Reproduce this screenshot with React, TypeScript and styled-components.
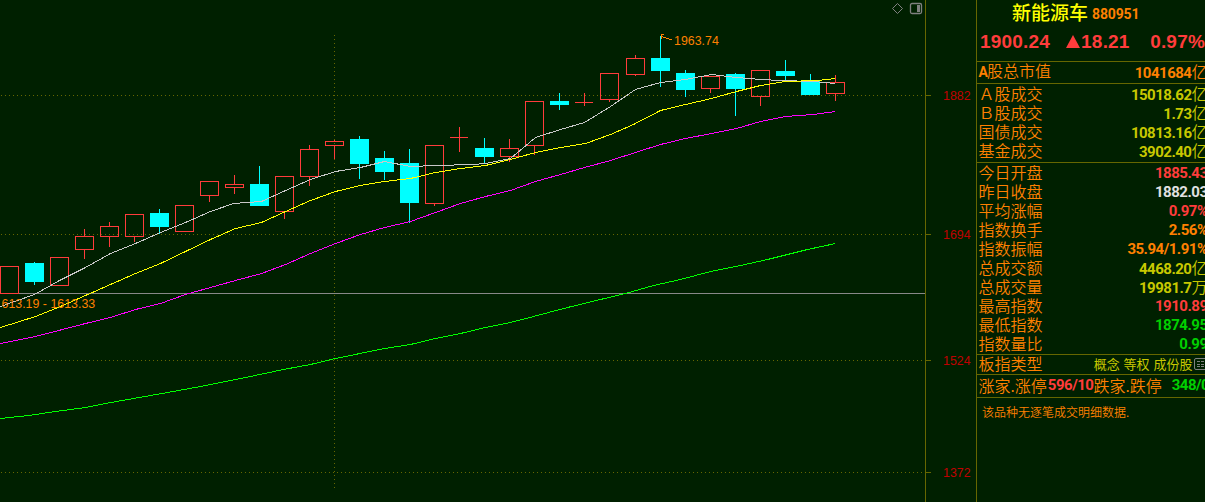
import React from "react";
import styled, { createGlobalStyle } from "styled-components";

const GlobalStyle = createGlobalStyle`
  body {
    margin: 0;
    background: #002000;
    overflow: hidden;
  }
`;

const colors = {
  back: "#002000",
  line: "#666600",
  orange: "#ff8000",
  red: "#ff3c3c",
  cyan: "#00ffff",
  yellow: "#c8c800",
  green: "#00d000",
  white: "#e0e0e0",
  axis: "#c00000",
};

const Screen = styled.div`
  display: flex;
  width: 1205px;
  height: 502px;
  overflow: hidden;
  background: ${colors.back};
`;

const Chart = styled.svg`
  display: block;
  flex: none;
  width: 976px;
  height: 502px;
`;

const ChartText = styled.text`
  font-family: "Liberation Sans", sans-serif;
  font-size: 12.4px;
`;

const Panel = styled.aside`
  flex: none;
  box-sizing: border-box;
  width: 229px;
  border-left: 1px solid ${colors.line};
  overflow: hidden;
  font-family: "Liberation Sans", "Noto Sans CJK SC", sans-serif;
`;

const Header = styled.header`
  height: 61px;
  border-bottom: 1px solid ${colors.line};
`;

const Title = styled.div`
  display: flex;
  align-items: center;
  height: 23px;
  padding-left: 35px;
  white-space: nowrap;
`;

const Name = styled.span`
  color: #ffff00;
  font-family: "Noto Sans CJK SC", sans-serif;
  font-size: 19px;
  font-weight: 500;
  line-height: 23px;
`;

const Code = styled.span`
  margin: 5px 0 0 4px;
  color: ${colors.orange};
  font-family: Roboto, sans-serif;
  font-size: 14px;
  font-weight: 700;
  letter-spacing: -0.15px;
`;

const Quote = styled.div`
  display: flex;
  align-items: center;
  height: 37px;
  padding-left: 3px;
  color: ${colors.red};
  font-size: 19px;
  font-weight: 700;
  letter-spacing: 0.2px;
  white-space: nowrap;
`;

const Change = styled.span`
  display: flex;
  align-items: center;
  width: 85px;
  margin-left: 16px;
`;

const Triangle = styled.svg`
  width: 14px;
  height: 13px;
  margin-right: 1px;
`;

const Section = styled.section<{ $top?: number; $bottom?: number }>`
  padding: ${(p) => p.$top ?? 0}px 0 ${(p) => p.$bottom ?? 0}px 1.5px;
  border-bottom: 1px solid ${colors.line};
`;

const Row = styled.div`
  display: flex;
  align-items: center;
  justify-content: space-between;
  width: 229px;
  height: 19px;
  white-space: nowrap;
`;

const Label = styled.span`
  margin-top: -2px;
  color: ${colors.orange};
  font-family: "Noto Sans CJK SC", sans-serif;
  font-size: 16px;
  font-weight: 350;
  line-height: 19px;
`;

const Value = styled.span<{ $color: string }>`
  color: ${(p) => p.$color};
  font-family: Roboto, "Noto Sans CJK SC", sans-serif;
  font-size: 15px;
  font-weight: 700;
  line-height: 19px;
  letter-spacing: -0.5px;
`;

const Unit = styled.span`
  font-family: "Noto Sans CJK SC", sans-serif;
  font-size: 16px;
  font-weight: 350;
  line-height: 17px;
  letter-spacing: 0;
`;

const Bold = styled.b`
  font-family: Roboto, sans-serif;
  font-size: 14px;
  letter-spacing: -1px;
`;

const Tags = styled.span`
  display: flex;
  align-items: center;
  gap: 1px;
  margin: -2px 1px 0 0;
  color: ${colors.yellow};
  font-family: "Noto Sans CJK SC", sans-serif;
  font-size: 13px;
  line-height: 19px;
  word-spacing: 1px;
`;

const Counts = styled(Row)`
  justify-content: flex-start;
  height: 22px;
`;

const Count = styled(Value)<{ $width: number; $left: number }>`
  box-sizing: border-box;
  width: ${(p) => p.$width}px;
  margin-top: -2px;
  padding-left: ${(p) => p.$left}px;
`;

const Note = styled.p`
  margin: 5px 0 0 5px;
  color: ${colors.orange};
  font-family: "Noto Sans CJK SC", sans-serif;
  font-size: 12px;
  font-weight: 350;
  line-height: 18px;
`;

// x of centre, body top, body bottom, wick top, wick bottom, rising
type Candle = [number, number, number, number, number, boolean];

const candles: Candle[] = [
  [9, 266, 294, 266, 294, true],
  [34, 263, 282, 262, 285, false],
  [59, 257, 286, 257, 286, true],
  [84, 236, 250, 229, 259, true],
  [109, 226, 237, 222, 247, true],
  [134, 214, 237, 214, 242, true],
  [159, 213, 227, 209, 234, false],
  [184, 205, 232, 205, 232, true],
  [209, 181, 196, 181, 202, true],
  [234, 184, 188, 175, 194, true],
  [259, 184, 206, 166, 206, false],
  [284, 176, 212, 176, 219, true],
  [309, 149, 177, 145, 186, true],
  [334, 141, 146, 140, 159, true],
  [359, 139, 164, 136, 179, false],
  [384, 158, 172, 151, 180, false],
  [409, 163, 203, 149, 223, false],
  [434, 145, 204, 145, 206, true],
  [459, 137, 138, 127, 152, true],
  [484, 148, 157, 138, 163, false],
  [509, 148, 157, 139, 162, true],
  [534, 101, 146, 101, 155, true],
  [559, 101, 105, 93, 110, false],
  [584, 102, 103, 93, 106, true],
  [609, 73, 100, 73, 102, true],
  [635, 58, 75, 55, 76, true],
  [660, 58, 71, 36, 87, false],
  [685, 73, 90, 70, 97, false],
  [710, 76, 89, 76, 93, true],
  [735, 74, 89, 73, 116, false],
  [760, 70, 97, 70, 106, true],
  [785, 71, 76, 60, 80, false],
  [810, 81, 95, 74, 95, false],
  [835, 82, 94, 75, 101, true],
];

const averages = [
  {
    color: "#c8c8c8",
    points:
      "0,306 34,294 59,280 85,267 110,253 135,243 160,232 185,222 210,211 233,203 261,201 283,191 310,179 335,171 360,167 384,161 410,166 435,165 473,164 485,163 510,158 535,137 560,129 584,122 610,106 635,89 660,82 685,79 711,74 736,77 760,79 780,80 813,81 835,83",
  },
  {
    color: "#ffff00",
    points:
      "0,327 35,316 60,306 85,295 110,284 135,273 160,263 185,251 210,239 235,228 261,222 283,212 310,200 335,191 360,185 384,181 410,178 435,172 460,168 485,165 510,159 535,152 560,147 585,143 610,134 633,124 660,110 685,104 711,98 736,91 760,85 785,81 817,80 835,78",
  },
  {
    color: "#ff00ff",
    points:
      "0,343 35,336 85,323 110,317 135,309 160,303 185,294 210,287 235,280 261,273 285,264 310,253 335,243 360,234 384,227 410,221 435,212 460,203 485,196 510,190 535,181 560,174 584,167 610,160 635,152 660,144 685,138 711,133 736,128 760,121 785,116 813,114 835,111",
  },
  {
    color: "#00ff00",
    points:
      "0,418 28,415 55,411 85,407 105,403 133,398 167,392 200,386 245,377 283,369 310,364 335,358 384,348 410,344 435,338 460,333 485,327 510,322 533,316 567,307 600,299 625,293 653,285 680,279 710,271 740,265 767,259 807,249 835,243",
  },
];

const grid = [
  { y: 95, label: "1882" },
  { y: 234, label: "1694" },
  { y: 360, label: "1524" },
  { y: 472, label: "1372" },
];

const turnover = [
  { label: "Ａ股成交", value: "15018.62", unit: "亿", color: colors.yellow },
  { label: "Ｂ股成交", value: "1.73", unit: "亿", color: colors.yellow },
  { label: "国债成交", value: "10813.16", unit: "亿", color: colors.yellow },
  { label: "基金成交", value: "3902.40", unit: "亿", color: colors.yellow },
];

const stats = [
  { label: "今日开盘", value: "1885.43", color: colors.red },
  { label: "昨日收盘", value: "1882.03", color: colors.white },
  { label: "平均涨幅", value: "0.97%", color: colors.red },
  { label: "指数换手", value: "2.56%", color: colors.orange },
  { label: "指数振幅", value: "35.94/1.91%", color: colors.orange },
  { label: "总成交额", value: "4468.20", unit: "亿", color: colors.yellow },
  { label: "总成交量", value: "19981.7", unit: "万", color: colors.yellow },
  { label: "最高指数", value: "1910.89", color: colors.red },
  { label: "最低指数", value: "1874.95", color: colors.green },
  { label: "指数量比", value: "0.99", color: colors.green },
];

interface StatProps {
  label: React.ReactNode;
  value: string;
  unit?: string;
  color: string;
}

const Stat: React.FC<StatProps> = ({ label, value, unit, color }) => (
  <Row>
    <Label>{label}</Label>
    <Value $color={color}>
      {value}
      {unit && <Unit>{unit}</Unit>}
    </Value>
  </Row>
);

const CandleShape: React.FC<{ candle: Candle }> = ({ candle }) => {
  const [x, top, bottom, high, low, rising] = candle;
  const color = rising ? colors.red : colors.cyan;
  if (!rising) {
    return (
      <g fill={color}>
        <rect x={x} y={high} width={1} height={low - high} />
        <rect x={x - 9} y={top} width={19} height={bottom - top} />
      </g>
    );
  }
  return (
    <g fill={color}>
      <rect x={x} y={high} width={1} height={top - high} />
      <rect x={x} y={bottom} width={1} height={low - bottom} />
      {bottom - top > 1 ? (
        <rect
          x={x - 8.5}
          y={top + 0.5}
          width={18}
          height={bottom - top - 1}
          fill="none"
          stroke={color}
        />
      ) : (
        <rect x={x - 9} y={top} width={18} height={1} />
      )}
    </g>
  );
};

const KLine = () => (
  <Chart viewBox="0 0 976 502" shapeRendering="crispEdges">
    {grid.map(({ y, label }) => (
      <g key={label}>
        <line x1={1} x2={925} y1={y + 0.5} y2={y + 0.5} stroke={colors.line} strokeDasharray="1 3" />
        <rect x={926} y={y} width={5} height={1} fill={colors.line} />
        <ChartText x={943} y={y + 5} fill={colors.axis}>
          {label}
        </ChartText>
      </g>
    ))}
    <line x1={334.5} x2={334.5} y1={35} y2={489} stroke={colors.line} strokeDasharray="1 3" />
    <rect x={925} y={0} width={1} height={502} fill={colors.line} />
    <rect x={0} y={293} width={925} height={1} fill="#888888" />
    {candles.map((candle) => (
      <CandleShape key={candle[0]} candle={candle} />
    ))}
    {averages.map(({ color, points }) => (
      <polyline key={color} points={points} transform="translate(0.5 0.5)" fill="none" stroke={color} />
    ))}
    <ChartText x={1.5} y={308} fill={colors.orange}>
      613.19 - 1613.33
    </ChartText>
    <ChartText x={674} y={45} fill={colors.orange}>
      1963.74
    </ChartText>
    <path d="M664 34.5h-3v4M661 36.5l11 3.5" fill="none" stroke={colors.orange} />
    <g fill="none" stroke="#808080" shapeRendering="auto">
      <path d="M897.5 3.5l5 5-5 5-5-5z" />
      <rect x={910.5} y={3.5} width={11} height={10} rx={1.5} strokeWidth={1.3} />
      <rect x={917} y={5} width={3} height={7} fill="#808080" stroke="none" />
    </g>
  </Chart>
);

const ListIcon = () => (
  <svg width="13" height="12" viewBox="0 0 13 12" fill="none" stroke="#808080">
    <rect x="0.5" y="0.5" width="12" height="11" rx="1.5" />
    <path d="M3 3.5h3M7 3.5h3M3 6.5h3M7 6.5h3M3 8.5h3M7 8.5h3" />
  </svg>
);

export default function App() {
  return (
    <Screen>
      <GlobalStyle />
      <KLine />
      <Panel>
        <Header>
          <Title>
            <Name>新能源车</Name>
            <Code>880951</Code>
          </Title>
          <Quote>
            <span>1900.24</span>
            <Change>
              <Triangle viewBox="0 0 14 13">
                <path d="M7 0L14 13H0z" fill={colors.red} />
              </Triangle>
              18.21
            </Change>
            <span>0.97%</span>
          </Quote>
        </Header>
        <Section $top={1} $bottom={1}>
          <Stat
            label={
              <>
                <Bold>A</Bold>股总市值
              </>
            }
            value="1041684"
            unit="亿"
            color={colors.orange}
          />
        </Section>
        <Section $top={1} $bottom={1}>
          {turnover.map((item) => (
            <Stat key={item.label} {...item} />
          ))}
        </Section>
        <Section $top={1}>
          {stats.map((item) => (
            <Stat key={item.label} {...item} />
          ))}
        </Section>
        <Section>
          <Row>
            <Label>板指类型</Label>
            <Tags>
              概念 等权 成份股
              <ListIcon />
            </Tags>
          </Row>
        </Section>
        <Section>
          <Counts>
            <Label>涨家.涨停</Label>
            <Count $color={colors.red} $width={49} $left={1}>
              596/10
            </Count>
            <Label>跌家.跌停</Label>
            <Count $color={colors.green} $width={50} $left={10}>
              348/0
            </Count>
          </Counts>
        </Section>
        <Note>该品种无逐笔成交明细数据.</Note>
      </Panel>
    </Screen>
  );
}
